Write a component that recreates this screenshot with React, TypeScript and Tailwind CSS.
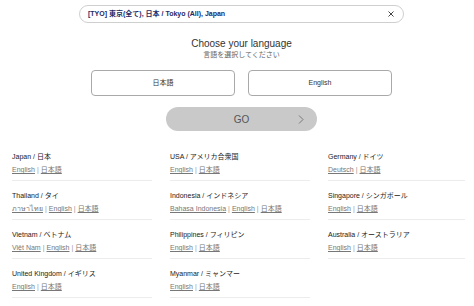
import React from 'react';

type Country = {
  name: string;
  links: string[];
};

const columns: Country[][] = [
  [
    { name: 'Japan / 日本', links: ['English', '日本語'] },
    { name: 'Thailand / タイ', links: ['ภาษาไทย', 'English', '日本語'] },
    { name: 'Vietnam / ベトナム', links: ['Việt Nam', 'English', '日本語'] },
    { name: 'United Kingdom / イギリス', links: ['English', '日本語'] },
  ],
  [
    { name: 'USA / アメリカ合衆国', links: ['English', '日本語'] },
    { name: 'Indonesia / インドネシア', links: ['Bahasa Indonesia', 'English', '日本語'] },
    { name: 'Philippines / フィリピン', links: ['English', '日本語'] },
    { name: 'Myanmar / ミャンマー', links: ['English', '日本語'] },
  ],
  [
    { name: 'Germany / ドイツ', links: ['Deutsch', '日本語'] },
    { name: 'Singapore / シンガポール', links: ['English', '日本語'] },
    { name: 'Australia / オーストラリア', links: ['English', '日本語'] },
  ],
];

const CountryRow = ({ country }: { country: Country }) => (
  <div className="pt-[9px] pb-[4px] border-b border-[#ececec]">
    <div className="h-[12px] leading-[12px] text-[7px] text-[#222]">{country.name}</div>
    <div className="mt-[1px] h-[12px] leading-[12px] text-[7px] text-[#777]">
      {country.links.map((l, i) => (
        <React.Fragment key={l}>
          {i > 0 && <span className="mx-[2px] text-[#999]">|</span>}
          <span className="underline underline-offset-1">{l}</span>
        </React.Fragment>
      ))}
    </div>
  </div>
);

const App = () => {
  return (
    <div
      className="w-[474px] h-[306px] bg-white overflow-hidden"
      style={{ fontFamily: '"Liberation Sans", "Noto Sans CJK JP", "Noto Sans", sans-serif' }}
    >
      <div className="ml-[9px] w-[465px] flex flex-col items-center pt-[5px]">
        <div className="w-[325px] h-[18px] rounded-full border border-[#cfcfcf] flex items-center justify-between pl-[8px] pr-[9px]">
          <span className="text-[7px] font-bold text-[#1e2a66]">
            [TYO] 東京(全て), 日本 / Tokyo (All), Japan
          </span>
          <svg width="6" height="6" viewBox="0 0 6 6" className="text-[#444]">
            <path d="M0.5 0.5L5.5 5.5M5.5 0.5L0.5 5.5" stroke="currentColor" strokeWidth="1" />
          </svg>
        </div>

        <div className="mt-[15px] text-[10px] leading-[12px] text-[#333]">Choose your language</div>
        <div className="text-[7px] leading-[9px] text-[#666]">言語を選択してください</div>

        <div className="mt-[11px] flex gap-[13px]">
          <button className="w-[144px] h-[26px] rounded-[4px] border border-[#a9a9a9] bg-white text-[7px] text-[#333]">
            日本語
          </button>
          <button className="w-[144px] h-[26px] rounded-[4px] border border-[#a9a9a9] bg-white text-[7px] text-[#333]">
            English
          </button>
        </div>

        <div className="mt-[11px] w-[151px] h-[24px] rounded-full bg-[#c9c9c9] relative flex items-center justify-center">
          <span className="text-[10px] text-[#555]">GO</span>
          <svg
            width="6"
            height="9"
            viewBox="0 0 6 9"
            className="absolute right-[13px] top-[8px] text-[#666]"
          >
            <path d="M1 0.5L5 4.5L1 8.5" fill="none" stroke="currentColor" strokeWidth="0.8" />
          </svg>
        </div>
      </div>

      <div className="mt-[11px] pl-[12px] grid grid-cols-[140px_140px_137px] gap-x-[18px] items-start">
        {columns.map((col, ci) => (
          <div key={ci}>
            {col.map((c) => (
              <CountryRow key={c.name} country={c} />
            ))}
          </div>
        ))}
      </div>
    </div>
  );
};

export default App;
